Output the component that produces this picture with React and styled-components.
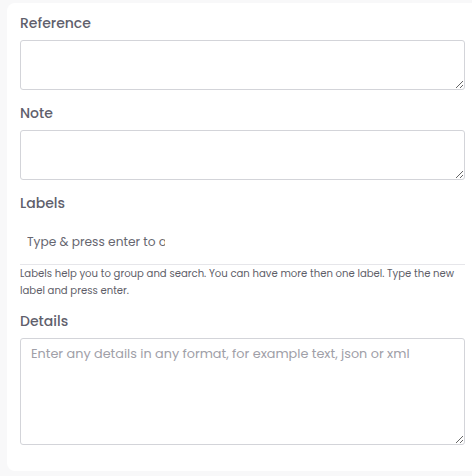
import React from "react";
import styled, { createGlobalStyle } from "styled-components";

const Global = createGlobalStyle`
  html, body { margin: 0; padding: 0; background: #f8f8f9; overflow: hidden; }
  body { font-family: "Poppins", "Open Sans", sans-serif; }
  * { box-sizing: border-box; }
`;

const Page = styled.div`
  padding: 3px 0 6px 7px;
  height: 476px;
  width: 100vw;
`;

const Card = styled.div`
  background: #ffffff;
  border-radius: 8px 0 0 8px;
  padding: 10px 7px 26px 13px;
`;

const Group = styled.div`
  margin-bottom: ${(p) => p.$mb ?? 13}px;
`;

const Label = styled.label`
  display: block;
  font-size: 14px;
  font-weight: 500;
  line-height: 20px;
  color: #60606c;
  margin-bottom: 7px;
`;

const Area = styled.textarea`
  display: block;
  width: 100%;
  height: ${(p) => p.$h}px;
  border: 1px solid #d3d4d9;
  border-radius: 3px;
  padding: 5px 10px;
  font-family: inherit;
  font-size: 12.8px;
  line-height: 20px;
  color: #333;
  resize: vertical;
  outline: none;
  &::placeholder { color: #a0a0a8; }
`;

const TagBox = styled.div`
  border-bottom: 1px solid #e6e6ea;
  padding: 13px 0 13px 7px;
  display: flex;
`;

const TagInput = styled.input`
  border: none;
  outline: none;
  width: 138px;
  padding: 0;
  font-family: inherit;
  font-size: 12.2px;
  line-height: 18px;
  color: #333;
  &::placeholder { color: #666670; }
`;

const Help = styled.div`
  font-size: 10.1px;
  line-height: 17px;
  color: #5e5e68;
`;

export default function App() {
  return (
    <>
      <Global />
      <Page>
        <Card>
          <Group>
            <Label>Reference</Label>
            <Area $h={50} />
          </Group>
          <Group>
            <Label>Note</Label>
            <Area $h={50} />
          </Group>
          <Group $mb={12}>
            <Label>Labels</Label>
            <TagBox>
              <TagInput placeholder="Type & press enter to add" />
            </TagBox>
            <Help>
              Labels help you to group and search. You can have more then one label. Type the new label and press enter.
            </Help>
          </Group>
          <Group $mb={0}>
            <Label>Details</Label>
            <Area $h={107} placeholder="Enter any details in any format, for example text, json or xml" />
          </Group>
        </Card>
      </Page>
    </>
  );
}
